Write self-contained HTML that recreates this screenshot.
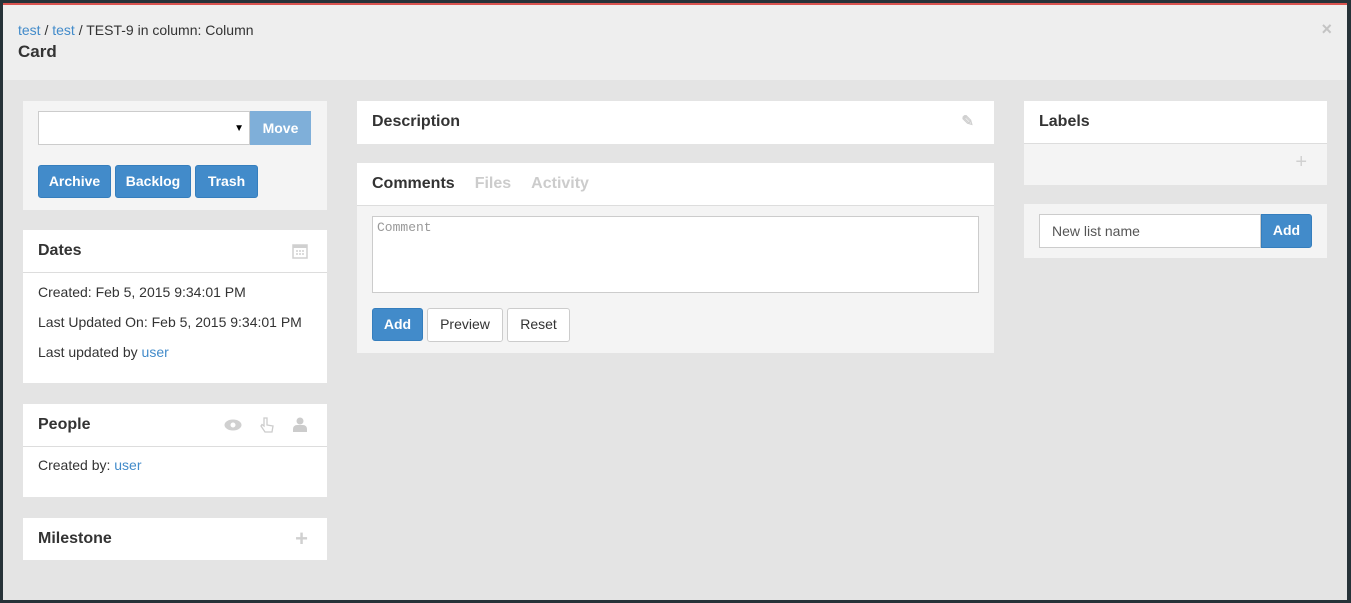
<!DOCTYPE html>
<html><head><style>
*{box-sizing:border-box;margin:0;padding:0}
body{width:1351px;height:603px;background:#263238;font-family:"Liberation Sans",sans-serif;font-size:14px;color:#333;position:relative;overflow:hidden}
.modal{position:absolute;left:3px;top:3px;width:1344px;height:597px;background:#e4e4e4;border-top:2px solid #d9534f}
.hdr{height:75px;background:#eeeeee;padding:15px 15px}
a{color:#428bca;text-decoration:none}
.crumb{font-size:14px;line-height:20px}
.title{font-size:17px;font-weight:bold;margin-top:2px}
.x{position:absolute;right:15px;top:14px;color:#c4c4c4;font-size:18px;font-weight:bold}
.panel{position:absolute;background:#fff}
.ph{height:43px;border-bottom:1px solid #ddd;padding:0 15px;line-height:42px;font-weight:bold;font-size:16px;position:relative}
.btn{position:absolute;background:#428bca;color:#fff;border:1px solid #357ebd;border-radius:3px;font-size:14px;text-align:center;line-height:31px;height:33px;font-weight:bold}
.wb{position:absolute;background:#fff;color:#333;border:1px solid #ccc;border-radius:3px;font-size:14px;text-align:center;line-height:31px;height:34px}
.ico{position:absolute;color:#d0d0d0}
p{line-height:30px}
</style></head><body>
<div class="modal">
<div class="hdr"><div class="crumb"><a>test</a> / <a>test</a> / TEST-9 in column: Column</div><div class="title">Card</div></div>
<div class="x">×</div>

<div class="panel" style="left:20px;top:96px;width:304px;height:109px;background:#f4f4f4">
 <div style="position:absolute;left:15px;top:10px;width:212px;height:34px;background:#fff;border:1px solid #ccc"><span style="position:absolute;right:5px;top:11px;font-size:10px;color:#000">▼</span></div>
 <div style="position:absolute;left:227px;top:10px;width:61px;height:34px;background:#7fafd9;color:#fff;text-align:center;line-height:34px;font-weight:bold">Move</div>
 <div class="btn" style="left:15px;top:64px;width:73px">Archive</div>
 <div class="btn" style="left:92px;top:64px;width:76px">Backlog</div>
 <div class="btn" style="left:172px;top:64px;width:63px">Trash</div>
</div>

<div class="panel" style="left:20px;top:225px;width:304px;height:153px">
 <div class="ph">Dates<svg class="ico" style="right:19px;top:13px" width="16" height="16" viewBox="0 0 16 16"><rect x="1" y="2" width="14" height="13" fill="none" stroke="#d0d0d0" stroke-width="1.5"/><rect x="1" y="2" width="14" height="3" fill="#d0d0d0"/><path d="M4 8h2M7 8h2M10 8h2M4 11h2M7 11h2M10 11h2" stroke="#d0d0d0" stroke-width="1.5"/></svg></div>
 <div style="padding:4px 15px;font-size:14px"><p>Created: Feb 5, 2015 9:34:01 PM</p><p>Last Updated On: Feb 5, 2015 9:34:01 PM</p><p>Last updated by <a>user</a></p></div>
</div>

<div class="panel" style="left:20px;top:399px;width:304px;height:93px">
 <div class="ph">People
  <svg class="ico" style="right:85px;top:15px" width="18" height="12" viewBox="0 0 18 12"><ellipse cx="9" cy="6" rx="8.5" ry="5.5" fill="#d0d0d0"/><circle cx="9" cy="6" r="2.5" fill="#fff"/></svg>
  <svg class="ico" style="right:53px;top:13px" width="14" height="16" viewBox="0 0 14 16"><path d="M4 1v8L2 7.5 1 9l4 6h7l1-6-6-1V1z" fill="none" stroke="#ccc" stroke-width="1.3"/></svg>
  <svg class="ico" style="right:20px;top:13px" width="14" height="15" viewBox="0 0 14 15"><circle cx="7" cy="4" r="3.5" fill="#ccc"/><path d="M0 15v-3a4 4 0 014-4h6a4 4 0 014 4v3z" fill="#ccc"/></svg>
 </div>
 <div style="padding:3px 15px"><p>Created by: <a>user</a></p></div>
</div>

<div class="panel" style="left:20px;top:513px;width:304px;height:42px">
 <div class="ph" style="border:none">Milestone<span class="ico" style="right:19px;top:0;font-size:22px">+</span></div>
</div>

<div class="panel" style="left:354px;top:96px;width:637px;height:43px">
 <div class="ph" style="border:none">Description<span class="ico" style="right:20px;top:0;font-size:15px">✎</span></div>
</div>

<div class="panel" style="left:354px;top:158px;width:637px;height:190px;background:#f4f4f4">
 <div class="ph" style="background:#fff">Comments<span style="color:#ccc;margin-left:20px">Files</span><span style="color:#ccc;margin-left:20px">Activity</span></div>
 <div style="position:absolute;left:15px;top:53px;width:607px;height:77px;background:#fff;border:1px solid #ccc;font-family:'Liberation Mono',monospace;font-size:13px;color:#999;padding:3px 4px">Comment</div>
 <div class="btn" style="left:15px;top:145px;width:51px;font-weight:bold">Add</div>
 <div class="wb" style="left:70px;top:145px;width:76px">Preview</div>
 <div class="wb" style="left:150px;top:145px;width:63px">Reset</div>
</div>

<div class="panel" style="left:1021px;top:96px;width:303px;height:84px;background:#f4f4f4">
 <div class="ph" style="background:#fff">Labels</div>
 <span class="ico" style="right:20px;top:50px;font-size:20px">+</span>
</div>

<div class="panel" style="left:1021px;top:199px;width:303px;height:54px;background:#f4f4f4">
 <div style="position:absolute;left:15px;top:10px;width:222px;height:34px;background:#fff;border:1px solid #ccc;padding-left:12px;line-height:32px;color:#555">New list name</div>
 <div class="btn" style="left:237px;top:10px;width:51px;height:34px;border-radius:0 3px 3px 0;font-weight:bold">Add</div>
</div>
</div>
</body></html>
